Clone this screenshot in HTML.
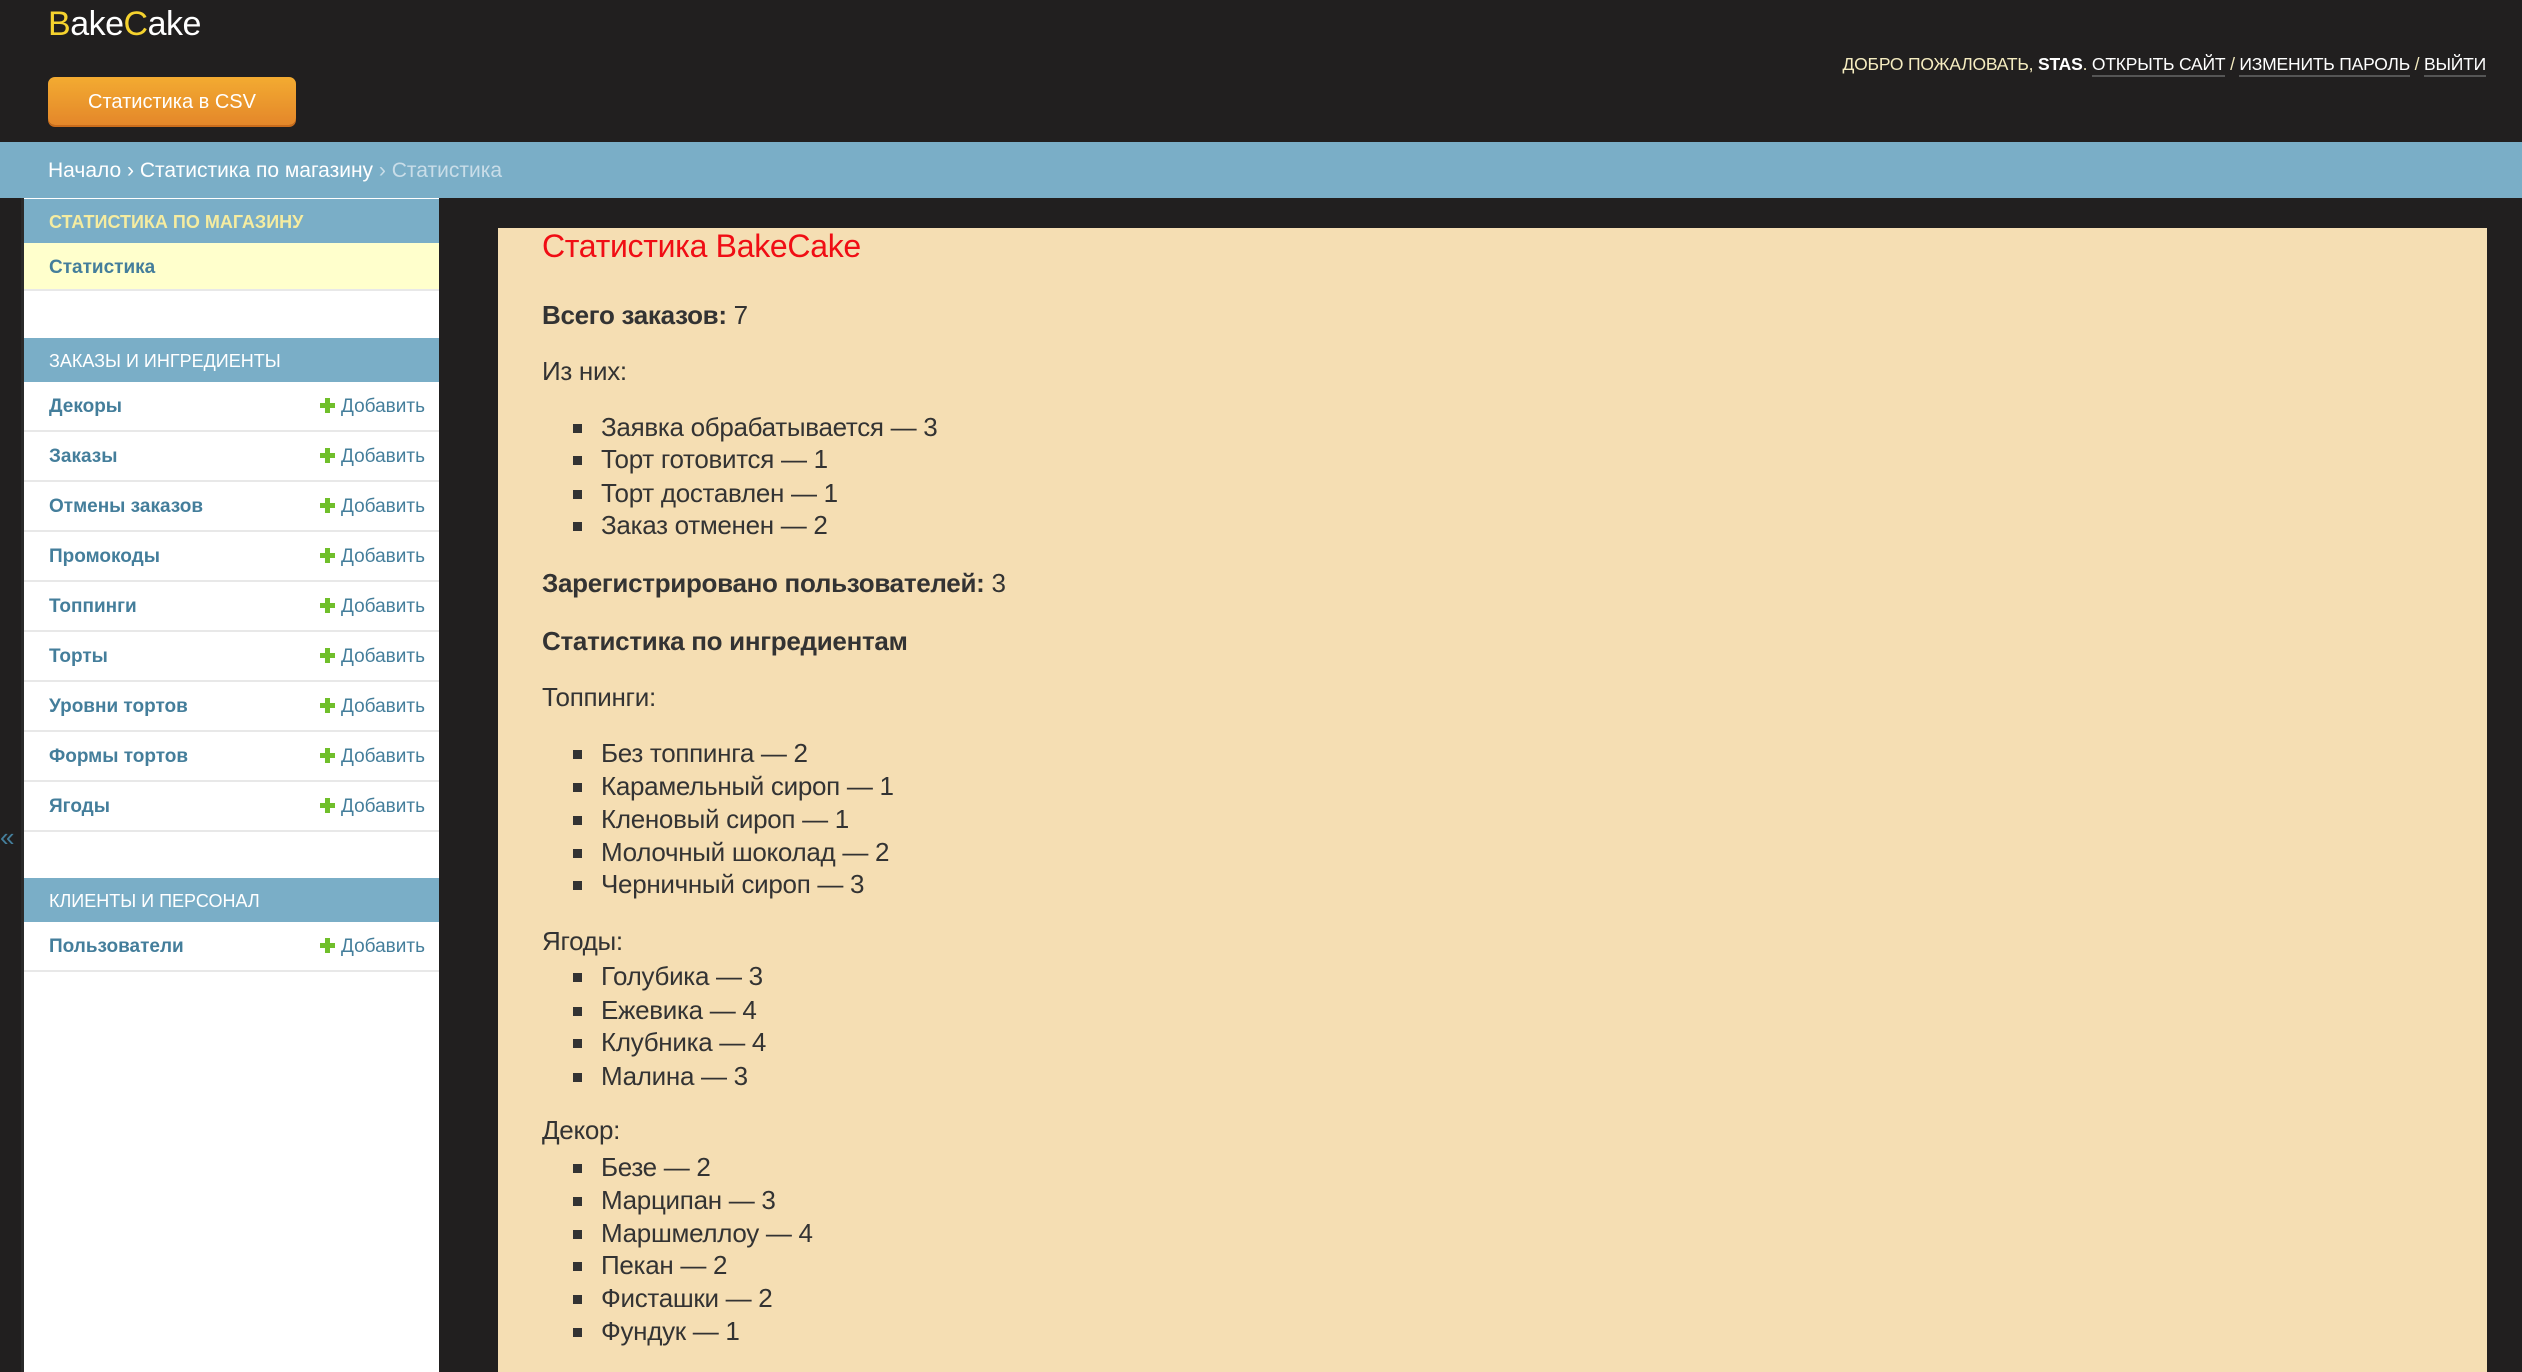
<!DOCTYPE html>
<html><head><meta charset="utf-8"><style>
*{margin:0;padding:0;box-sizing:border-box}
body{width:2522px;height:1372px;background:#211f1f;font-family:"Liberation Sans","DejaVu Sans",sans-serif;position:relative;overflow:hidden}
.a{position:absolute;white-space:nowrap}
#hdr{position:absolute;left:0;top:0;width:2522px;height:142px;background:#211f1f}
.logo{left:48px;top:5px;font-size:34px;color:#fff;letter-spacing:-0.5px}
.logo b{font-weight:normal;color:#f5d22e}
.btn{left:48px;top:77px;width:248px;height:48px;border-radius:7px;background:linear-gradient(#f3ab31,#e4872a);box-shadow:0 2px 0 #c96c1c;color:#fff;font-size:20px;text-align:center;line-height:50px}
.user{right:36px;top:54px;font-size:17.5px;color:#f5ecc0;letter-spacing:-0.2px}
.user span.u{color:#fff;border-bottom:2px solid #555;padding-bottom:1px}
#bc{position:absolute;left:0;top:142px;width:2522px;height:56px;background:#7aaec7;font-size:21px;color:#fff;line-height:58px;padding-left:48px}
#bc i{font-style:normal;color:#c9dde8}
#side{position:absolute;left:21px;top:198px;width:418px;height:1174px;background:#fff;border-left:3px solid #2a2a2a}
.cap{position:absolute;left:0;width:415px;height:44px;background:#7aaec7;color:#fff;font-size:18px;line-height:46px;padding-left:25px}
.row{position:absolute;left:0;width:415px;height:50px;border-bottom:2px solid #e8e8e8;font-size:19px;line-height:50px;padding-left:25px;color:#447e9b;font-weight:bold}
.row .add{position:absolute;right:14px;top:0;font-weight:normal;color:#447e9b}
.pl{display:inline-block;position:relative;width:15px;height:15px;margin-right:6px;vertical-align:-1px}
.pl:before{content:"";position:absolute;left:5px;top:0;width:5px;height:15px;background:#70bf2b}
.pl:after{content:"";position:absolute;left:0;top:5px;width:15px;height:5px;background:#70bf2b}
#main{position:absolute;left:498px;top:228px;width:1989px;height:1144px;background:#f5deb3}
.t{font-size:26px;color:#333;letter-spacing:-0.3px}
.li{font-size:26px;color:#333;letter-spacing:-0.3px;left:601px}
.bul{position:absolute;left:573px;width:9px;height:9px;background:#333}
</style></head><body>
<div id="hdr"></div>
<div class="a logo"><b>B</b>ake<b>C</b>ake</div>
<div class="a btn">Статистика в CSV</div>
<div class="a user">ДОБРО ПОЖАЛОВАТЬ, <b style="color:#fff">STAS</b>. <span class="u">ОТКРЫТЬ САЙТ</span> / <span class="u">ИЗМЕНИТЬ ПАРОЛЬ</span> / <span class="u">ВЫЙТИ</span></div>
<div id="bc">Начало › Статистика по магазину <i>› Статистика</i></div>
<div class="a" style="left:0;top:822px;color:#447e9b;font-size:26px">«</div>
<div id="side">
<div class="cap" style="top:1px;color:#f5eca0;font-weight:bold">СТАТИСТИКА ПО МАГАЗИНУ</div>
<div class="row" style="top:45px;height:48px;background:#ffffcc">Статистика</div>
<div class="cap" style="top:140px">ЗАКАЗЫ И ИНГРЕДИЕНТЫ</div>
<div class="row" style="top:184px">Декоры<span class="add"><i class="pl"></i>Добавить</span></div>
<div class="row" style="top:234px">Заказы<span class="add"><i class="pl"></i>Добавить</span></div>
<div class="row" style="top:284px">Отмены заказов<span class="add"><i class="pl"></i>Добавить</span></div>
<div class="row" style="top:334px">Промокоды<span class="add"><i class="pl"></i>Добавить</span></div>
<div class="row" style="top:384px">Топпинги<span class="add"><i class="pl"></i>Добавить</span></div>
<div class="row" style="top:434px">Торты<span class="add"><i class="pl"></i>Добавить</span></div>
<div class="row" style="top:484px">Уровни тортов<span class="add"><i class="pl"></i>Добавить</span></div>
<div class="row" style="top:534px">Формы тортов<span class="add"><i class="pl"></i>Добавить</span></div>
<div class="row" style="top:584px">Ягоды<span class="add"><i class="pl"></i>Добавить</span></div>
<div class="cap" style="top:680px">КЛИЕНТЫ И ПЕРСОНАЛ</div>
<div class="row" style="top:724px">Пользователи<span class="add"><i class="pl"></i>Добавить</span></div>
</div>
<div id="main"></div>
<div class="a" style="left:542px;top:228px;font-size:32px;color:#f00d14;letter-spacing:-0.3px">Статистика BakeCake</div>
<div class="a t" style="left:542px;top:300px"><b>Всего заказов:</b> 7</div>
<div class="a t" style="left:542px;top:356px">Из них:</div>
<div class="a li" style="top:412px">Заявка обрабатывается — 3</div><div class="bul" style="top:424px"></div>
<div class="a li" style="top:444px">Торт готовится — 1</div><div class="bul" style="top:456px"></div>
<div class="a li" style="top:478px">Торт доставлен — 1</div><div class="bul" style="top:490px"></div>
<div class="a li" style="top:510px">Заказ отменен — 2</div><div class="bul" style="top:522px"></div>
<div class="a t" style="left:542px;top:568px"><b>Зарегистрировано пользователей:</b> 3</div>
<div class="a t" style="left:542px;top:626px"><b>Статистика по ингредиентам</b></div>
<div class="a t" style="left:542px;top:682px">Топпинги:</div>
<div class="a li" style="top:738px">Без топпинга — 2</div><div class="bul" style="top:750px"></div>
<div class="a li" style="top:771px">Карамельный сироп — 1</div><div class="bul" style="top:783px"></div>
<div class="a li" style="top:804px">Кленовый сироп — 1</div><div class="bul" style="top:816px"></div>
<div class="a li" style="top:837px">Молочный шоколад — 2</div><div class="bul" style="top:849px"></div>
<div class="a li" style="top:869px">Черничный сироп — 3</div><div class="bul" style="top:881px"></div>
<div class="a t" style="left:542px;top:926px">Ягоды:</div>
<div class="a li" style="top:961px">Голубика — 3</div><div class="bul" style="top:973px"></div>
<div class="a li" style="top:995px">Ежевика — 4</div><div class="bul" style="top:1007px"></div>
<div class="a li" style="top:1027px">Клубника — 4</div><div class="bul" style="top:1039px"></div>
<div class="a li" style="top:1061px">Малина — 3</div><div class="bul" style="top:1073px"></div>
<div class="a t" style="left:542px;top:1115px">Декор:</div>
<div class="a li" style="top:1152px">Безе — 2</div><div class="bul" style="top:1164px"></div>
<div class="a li" style="top:1185px">Марципан — 3</div><div class="bul" style="top:1197px"></div>
<div class="a li" style="top:1218px">Маршмеллоу — 4</div><div class="bul" style="top:1230px"></div>
<div class="a li" style="top:1250px">Пекан — 2</div><div class="bul" style="top:1262px"></div>
<div class="a li" style="top:1283px">Фисташки — 2</div><div class="bul" style="top:1295px"></div>
<div class="a li" style="top:1316px">Фундук — 1</div><div class="bul" style="top:1328px"></div>
</body></html>
